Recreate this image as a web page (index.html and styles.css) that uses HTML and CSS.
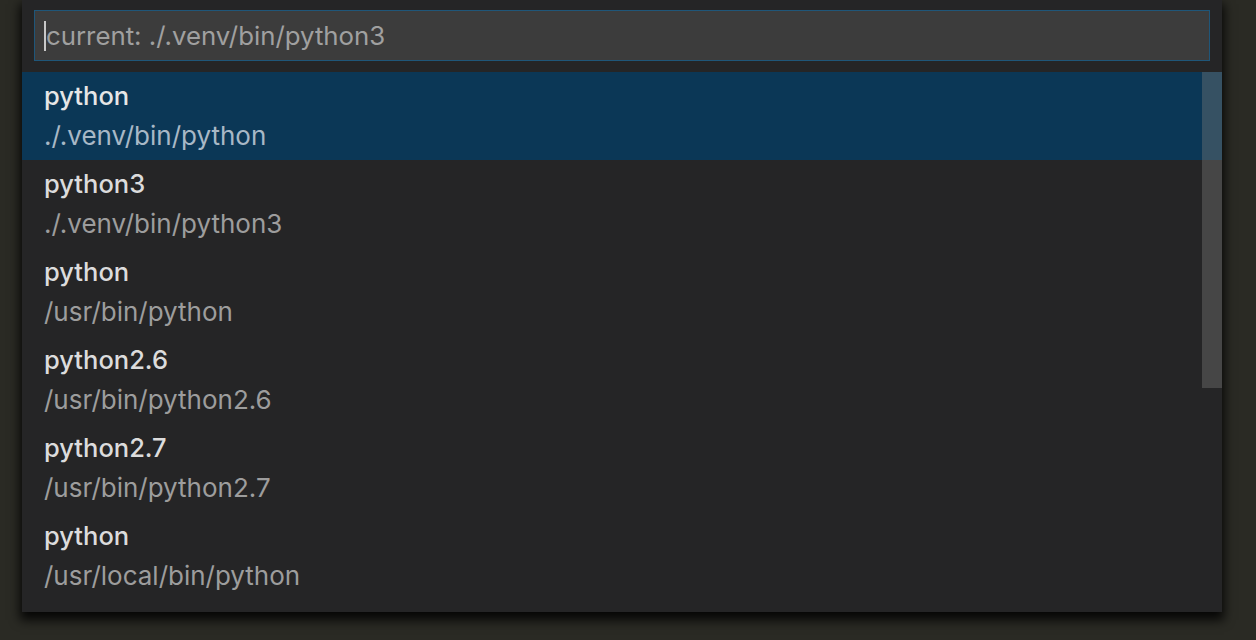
FILE: index.html
```html
<!DOCTYPE html>
<html>
<head>
<meta charset="utf-8">
<link rel="stylesheet" href="styles.css">
</head>
<body>
<div class="stage">
  <div class="picker">
    <div class="input-wrap">
      <div class="input"><span class="caret"></span><span class="placeholder">current: ./.venv/bin/python3</span></div>
    </div>
    <div class="list">
      <div class="rows">
        <div class="row selected"><div class="label">python</div><div class="desc">./.venv/bin/python</div></div>
        <div class="row"><div class="label">python3</div><div class="desc">./.venv/bin/python3</div></div>
        <div class="row"><div class="label">python</div><div class="desc">/usr/bin/python</div></div>
        <div class="row"><div class="label">python2.6</div><div class="desc">/usr/bin/python2.6</div></div>
        <div class="row"><div class="label">python2.7</div><div class="desc">/usr/bin/python2.7</div></div>
        <div class="row"><div class="label">python</div><div class="desc">/usr/local/bin/python</div></div>
      </div>
      <div class="scrollbar"><div class="thumb"></div></div>
    </div>
  </div>
</div>
</body>
</html>
```
FILE: styles.css
```css
html, body {
  margin: 0;
  padding: 0;
  height: 100%;
  background: #2a2a24;
  overflow: hidden;
}
.stage {
  padding-left: 22px;
  width: 1200px;
}
.picker {
  background: #252526;
  box-shadow: 0 6px 10px 2px rgba(0,0,0,0.85);
  padding: 10px 0 12px 0;
  font-family: Inter, "Liberation Sans", sans-serif;
}
.input-wrap {
  padding: 0 12px 11px 12px;
}
.input {
  height: 49px;
  background: #3c3c3c;
  border: 1px solid #1f5679;
  display: flex;
  align-items: center;
  padding-left: 9px;
  font-size: 25.8px;
  color: #a0a0a0;
}
.caret {
  width: 2px;
  height: 30px;
  background: #c8c8c8;
}
.list {
  position: relative;
  display: flex;
}
.rows {
  flex: 1;
}
.row {
  height: 88px;
  padding: 4px 22px;
  box-sizing: border-box;
  display: flex;
  flex-direction: column;
}
.row.selected {
  background: #0b3756;
}
.label {
  height: 40px;
  line-height: 40px;
  font-size: 25.5px;
  font-weight: 500;
  color: #dcdcdc;
}
.desc {
  height: 40px;
  line-height: 40px;
  font-size: 26px;
  color: #9d9d9d;
}
.row.selected .label { color: #e6e6e6; }
.row.selected .desc { color: #a8b8c6; }
.scrollbar {
  position: absolute;
  right: 0;
  top: 0;
  width: 20px;
  height: 100%;
}
.thumb {
  height: 316px;
  background: rgba(121,121,121,0.4);
}
```
